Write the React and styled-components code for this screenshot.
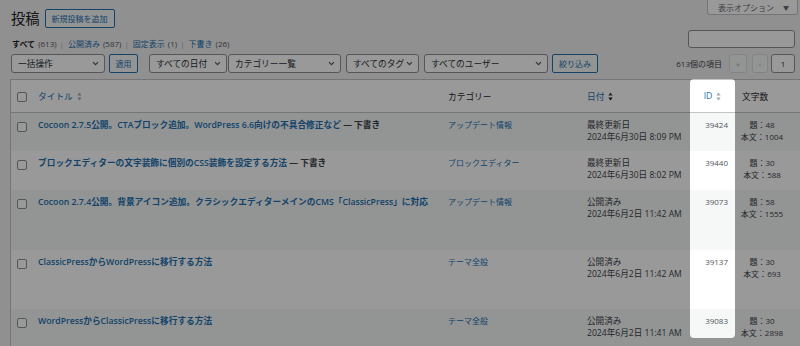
import React from "react";
import styled, { createGlobalStyle } from "styled-components";

const Global = createGlobalStyle`
  html, body { margin: 0; padding: 0; }
  body {
    background: #f0f0f1;
    font-family: "Open Sans", "Noto Sans CJK JP", sans-serif;
    font-size: 8px;
    color: #3c434a;
    width: 800px;
    height: 346px;
    overflow: hidden;
  }
  * { box-sizing: border-box; }
`;

const Page = styled.div`
  width: 800px;
  height: 346px;
  overflow: hidden;
  padding-left: 10px;
`;

const TopRow = styled.div`
  display: flex;
  justify-content: space-between;
  align-items: flex-start;
  height: 28px;
  padding-right: 2px;
`;

const HeadGroup = styled.div`
  display: flex;
  align-items: center;
  gap: 5px;
  margin-top: 9px;
  padding-left: 1px;
`;

const Heading = styled.h1`
  margin: 0;
  font-size: 14.3px;
  font-weight: 400;
  line-height: 19px;
  color: #1d2327;
`;

const OutlineButton = styled.button`
  display: inline-flex;
  align-items: center;
  justify-content: center;
  height: 19px;
  width: ${(p) => (p.$w ? `${p.$w}px` : "auto")};
  padding: 0 ${(p) => p.$px ?? 6}px;
  margin-left: ${(p) => p.$ml || 0}px;
  border: 1px solid #2271b1;
  border-radius: 2px;
  background: #f6f7f7;
  color: #2271b1;
  font-family: inherit;
  font-size: 8px;
  line-height: 1;
  white-space: nowrap;
`;

const ScreenTab = styled.div`
  display: flex;
  align-items: center;
  gap: 9px;
  height: 15px;
  padding: 0 8px 0 10px;
  background: #fff;
  border: 1px solid #c3c4c7;
  border-top: none;
  border-radius: 0 0 3px 3px;
  color: #646970;
  font-size: 8px;
`;

const TabArrow = styled.span`
  font-size: 6px;
  color: #646970;
`;

const FilterRow = styled.div`
  display: flex;
  justify-content: space-between;
  align-items: flex-end;
  margin-top: 2px;
  padding-right: 5px;
`;

const StatusList = styled.div`
  display: flex;
  align-items: center;
  padding-left: 2px;
  margin-bottom: -1px;
  line-height: 11px;
  font-size: 8px;
  white-space: nowrap;
`;

const StatusLink = styled.span`
  color: ${(p) => (p.$current ? "#1d2327" : "#2271b1")};
  font-weight: ${(p) => (p.$current ? 600 : 400)};
`;

const Count = styled.span`
  color: #50575e;
  margin-left: 3px;
`;

const Sep = styled.span`
  color: #a7aaad;
  margin: 0 4px 0 3px;
`;

const SearchBox = styled.div`
  width: 107px;
  height: 18px;
  background: #fff;
  border: 1px solid #8c8f94;
  border-radius: 3px;
`;

const Toolbar = styled.div`
  display: flex;
  justify-content: space-between;
  align-items: center;
  margin-top: 6px;
  height: 19px;
  padding-right: 5px;
`;

const ToolGroup = styled.div`
  display: flex;
  align-items: center;
`;

const Select = styled.div`
  display: flex;
  align-items: center;
  justify-content: space-between;
  width: ${(p) => p.$w}px;
  height: 19px;
  margin-left: ${(p) => p.$ml || 0}px;
  padding: 0 5px 0 6px;
  background: #fff;
  border: 1px solid #8c8f94;
  border-radius: 3px;
  color: #2c3338;
  font-size: 8.7px;
  white-space: nowrap;
`;

const PagerText = styled.span`
  color: #3c434a;
  font-size: 8px;
  margin-right: 7px;
`;

const PageButton = styled.div`
  display: flex;
  align-items: center;
  justify-content: center;
  width: ${(p) => p.$w}px;
  height: 19px;
  margin-left: ${(p) => p.$ml || 0}px;
  border: 1px solid ${(p) => (p.$input ? "#8c8f94" : "#dcdcde")};
  border-radius: 3px;
  background: ${(p) => (p.$input ? "#fff" : "#f6f7f7")};
  color: ${(p) => (p.$input ? "#2c3338" : "#a7aaad")};
  font-size: 8px;
`;

const Table = styled.table`
  margin-top: 6px;
  width: 830px;
  table-layout: fixed;
  border-collapse: separate;
  border-spacing: 0;
  background: #fff;
  border: 1px solid #c3c4c7;
`;

const HeadRow = styled.tr`
  height: 33px;
`;

const Th = styled.th`
  position: relative;
  padding: 0 ${(p) => p.$pr ?? 6}px 0 ${(p) => p.$pl ?? 7}px;
  border-bottom: 1px solid #c3c4c7;
  text-align: ${(p) => p.$align || "left"};
  vertical-align: middle;
  font-weight: 400;
  font-size: 8.7px;
  color: #1d2327;
  white-space: nowrap;
`;

const SortLink = styled.span`
  display: inline-flex;
  align-items: center;
  gap: 4px;
  color: #2271b1;
`;

const Row = styled.tr`
  height: ${(p) => p.$h}px;
  background: ${(p) => (p.$odd ? "#f6f7f7" : "#fff")};
`;

const Td = styled.td`
  padding: 6px ${(p) => p.$pr ?? 6}px 0 ${(p) => p.$pl ?? 7}px;
  vertical-align: top;
  text-align: ${(p) => p.$align || "left"};
  line-height: 12.4px;
  font-size: ${(p) => p.$fs || 8}px;
  color: ${(p) => p.$color || "#3c434a"};
  white-space: nowrap;
  overflow: hidden;
`;

const Checkbox = styled.span`
  display: block;
  width: 10px;
  height: 10px;
  margin-top: ${(p) => p.$mt || 0}px;
  background: #fff;
  border: 1px solid #8c8f94;
  border-radius: 2px;
`;

const RowTitle = styled.span`
  font-size: 8.7px;
  font-weight: 600;
  color: #2271b1;
`;

const PostState = styled.span`
  font-size: 8.7px;
  font-weight: 600;
  color: #3c434a;
`;

const CatLink = styled.span`
  color: #2271b1;
`;

const Line = styled.div``;

const Spotlight = styled.div`
  position: absolute;
  top: -1px;
  left: 0;
  right: 0;
  height: 259px;
  border-radius: 4px;
  box-shadow: 0 0 0 3000px rgba(0, 0, 0, 0.4);
  pointer-events: none;
  z-index: 10;
`;

const Chevron = () => (
  <svg width="7" height="5" viewBox="0 0 7 5">
    <path d="M1 1.2 L3.5 3.7 L6 1.2" fill="none" stroke="#50575e" strokeWidth="1.2" />
  </svg>
);

const SortIcon = ({ dark }) => (
  <svg width="5" height="9" viewBox="0 0 5 9">
    <path d="M0.3 3.6 L2.5 0.6 L4.7 3.6 Z" fill={dark ? "#3c434a" : "#a7aaad"} />
    <path d="M0.3 5.4 L2.5 8.4 L4.7 5.4 Z" fill={dark ? "#1d2327" : "#a7aaad"} />
  </svg>
);

const posts = [
  { title: "Cocoon 2.7.5公開。CTAブロック追加。WordPress 6.6向けの不具合修正など", state: "下書き", cat: "アップデート情報", status: "最終更新日", date: "2024年6月30日 8:09 PM", id: "39424", t: "48", b: "1004", h: 38 },
  { title: "ブロックエディターの文字装飾に個別のCSS装飾を設定する方法", state: "下書き", cat: "ブロックエディター", status: "最終更新日", date: "2024年6月30日 8:02 PM", id: "39440", t: "30", b: "588", h: 39 },
  { title: "Cocoon 2.7.4公開。背景アイコン追加。クラシックエディターメインのCMS「ClassicPress」に対応", cat: "アップデート情報", status: "公開済み", date: "2024年6月2日 11:42 AM", id: "39073", t: "58", b: "1555", h: 60 },
  { title: "ClassicPressからWordPressに移行する方法", cat: "テーマ全般", status: "公開済み", date: "2024年6月2日 11:42 AM", id: "39137", t: "30", b: "693", h: 59 },
  { title: "WordPressからClassicPressに移行する方法", cat: "テーマ全般", status: "公開済み", date: "2024年6月2日 11:41 AM", id: "39083", t: "30", b: "2898", h: 60 },
];

export default function App() {
  return (
    <>
      <Global />
      <Page>
        <TopRow>
          <HeadGroup>
            <Heading>投稿</Heading>
            <OutlineButton>新規投稿を追加</OutlineButton>
          </HeadGroup>
          <ScreenTab>
            <span>表示オプション</span>
            <TabArrow>▼</TabArrow>
          </ScreenTab>
        </TopRow>

        <FilterRow>
          <StatusList>
            <StatusLink $current>すべて</StatusLink>
            <Count>(613)</Count>
            <Sep>|</Sep>
            <StatusLink>公開済み</StatusLink>
            <Count>(587)</Count>
            <Sep>|</Sep>
            <StatusLink>固定表示</StatusLink>
            <Count>(1)</Count>
            <Sep>|</Sep>
            <StatusLink>下書き</StatusLink>
            <Count>(26)</Count>
          </StatusList>
          <SearchBox />
        </FilterRow>

        <Toolbar>
          <ToolGroup>
            <Select $w={94} $ml={1}>
              <span>一括操作</span>
              <Chevron />
            </Select>
            <OutlineButton $ml={4} $px={0} $w={29}>適用</OutlineButton>
            <Select $w={78} $ml={11}>
              <span>すべての日付</span>
              <Chevron />
            </Select>
            <Select $w={113} $ml={1}>
              <span>カテゴリー一覧</span>
              <Chevron />
            </Select>
            <Select $w={73} $ml={5}>
              <span>すべてのタグ</span>
              <Chevron />
            </Select>
            <Select $w={124} $ml={5}>
              <span>すべてのユーザー</span>
              <Chevron />
            </Select>
            <OutlineButton $ml={4} $px={0} $w={46}>絞り込み</OutlineButton>
          </ToolGroup>
          <ToolGroup>
            <PagerText>613個の項目</PagerText>
            <PageButton $w={18}>«</PageButton>
            <PageButton $w={16} $ml={5}>‹</PageButton>
            <PageButton $w={24} $ml={3} $input>1</PageButton>
          </ToolGroup>
        </Toolbar>

        <Table>
          <colgroup>
            <col style={{ width: 20 }} />
            <col style={{ width: 410 }} />
            <col style={{ width: 139 }} />
            <col style={{ width: 110 }} />
            <col style={{ width: 45 }} />
            <col style={{ width: 54 }} />
            <col style={{ width: 50 }} />
          </colgroup>
          <thead>
            <HeadRow>
              <Th $pl={6} $pr={0}>
                <Checkbox $mt={2} />
              </Th>
              <Th>
                <SortLink>
                  タイトル
                  <SortIcon />
                </SortLink>
              </Th>
              <Th>カテゴリー</Th>
              <Th>
                <SortLink>
                  日付
                  <SortIcon dark />
                </SortLink>
              </Th>
              <Th $align="center" $pl={0} $pr={0}>
                <SortLink>
                  ID
                  <SortIcon />
                </SortLink>
                <Spotlight />
              </Th>
              <Th>文字数</Th>
              <Th />
            </HeadRow>
          </thead>
          <tbody>
            {posts.map((p, i) => (
              <Row key={p.id} $h={p.h} $odd={i % 2 === 0}>
                <Td $pl={6} $pr={0}>
                  <Checkbox $mt={3} />
                </Td>
                <Td>
                  <RowTitle>{p.title}</RowTitle>
                  {p.state && <PostState> — {p.state}</PostState>}
                </Td>
                <Td>
                  <CatLink>{p.cat}</CatLink>
                </Td>
                <Td $fs={8.6}>
                  <Line>{p.status}</Line>
                  <Line>{p.date}</Line>
                </Td>
                <Td $align="right" $pl={0} $pr={7} $color="#50575e">
                  {p.id}
                </Td>
                <Td $align="center" $pl={0} $pr={0}>
                  <Line>題：{p.t}</Line>
                  <Line>本文：{p.b}</Line>
                </Td>
                <Td />
              </Row>
            ))}
          </tbody>
        </Table>
      </Page>
    </>
  );
}
